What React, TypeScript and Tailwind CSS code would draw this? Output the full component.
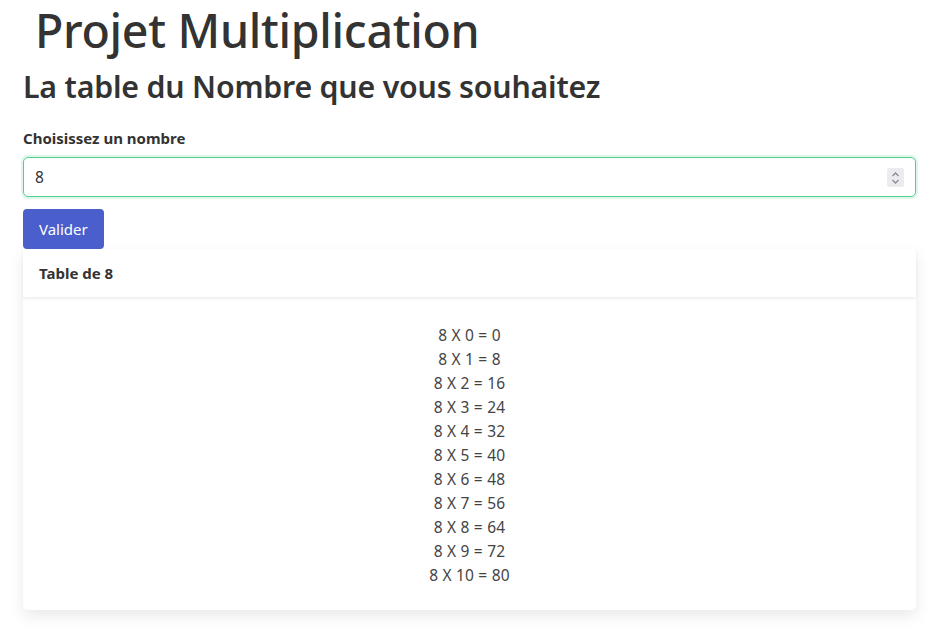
import { useState } from 'react';

export default function App() {
  const [value, setValue] = useState('8');
  const n = Number(value) || 0;
  const rows = Array.from({ length: 11 }, (_, i) => i);

  return (
    <div
      className="min-h-screen bg-white text-[#333333]"
      style={{ fontFamily: '"Noto Sans", "Open Sans", sans-serif' }}
    >
      <div className="ml-[23px] w-[893px]">
        {/* TITLES */}
        <h1 className="pl-[12px] text-[46.5px] font-medium leading-[60px] tracking-[-0.3px]">
          Projet Multiplication
        </h1>
        <h2 className="-mt-[1px] text-[30.3px] font-semibold leading-[56px] tracking-[-0.2px]">
          La table du Nombre que vous souhaitez
        </h2>

        {/* FORM */}
        <label className="mt-[13px] block text-[15px] font-bold leading-[20px]">
          Choisissez un nombre
        </label>
        <div className="relative mt-[9px]">
          <input
            type="number"
            value={value}
            onChange={(e) => setValue(e.target.value)}
            className="h-[40px] w-full rounded-[5px] border border-[#4fcf90] px-[11px] text-[15.5px] text-[#333] shadow-[0_0_0_2px_rgba(79,207,144,0.18)] outline-none [appearance:textfield]"
          />
          <div className="absolute right-[12px] top-[11px] flex h-[19px] w-[17px] flex-col items-center justify-center rounded-[2px] bg-[#ececef]">
            <svg width="9" height="14" viewBox="0 0 9 14" fill="none" stroke="#8a8a95" strokeWidth="1.3">
              <path d="M1.5 5 L4.5 2 L7.5 5" />
              <path d="M1.5 9 L4.5 12 L7.5 9" />
            </svg>
          </div>
        </div>
        <button className="mt-[12px] h-[40px] rounded-[4px] bg-[#4a5fcc] px-[16px] text-[15px] text-white">
          Valider
        </button>

        {/* RESULT CARD */}
        <div className="rounded-[5px] bg-white shadow-[0_6px_16px_rgba(0,0,0,0.09)]">
          <div className="flex h-[48px] items-center px-[16px] text-[15px] font-bold shadow-[0_2px_3px_rgba(0,0,0,0.07)]">
            Table de {n}
          </div>
          <div className="flex flex-col items-center pb-[23px] pt-[26px] text-[15.5px] leading-[24px] text-[#444]">
            {rows.map((i) => (
              <p key={i} className="tracking-[0.2px]">
                {n} X {i} = {n * i}
              </p>
            ))}
          </div>
        </div>
      </div>
    </div>
  );
}
